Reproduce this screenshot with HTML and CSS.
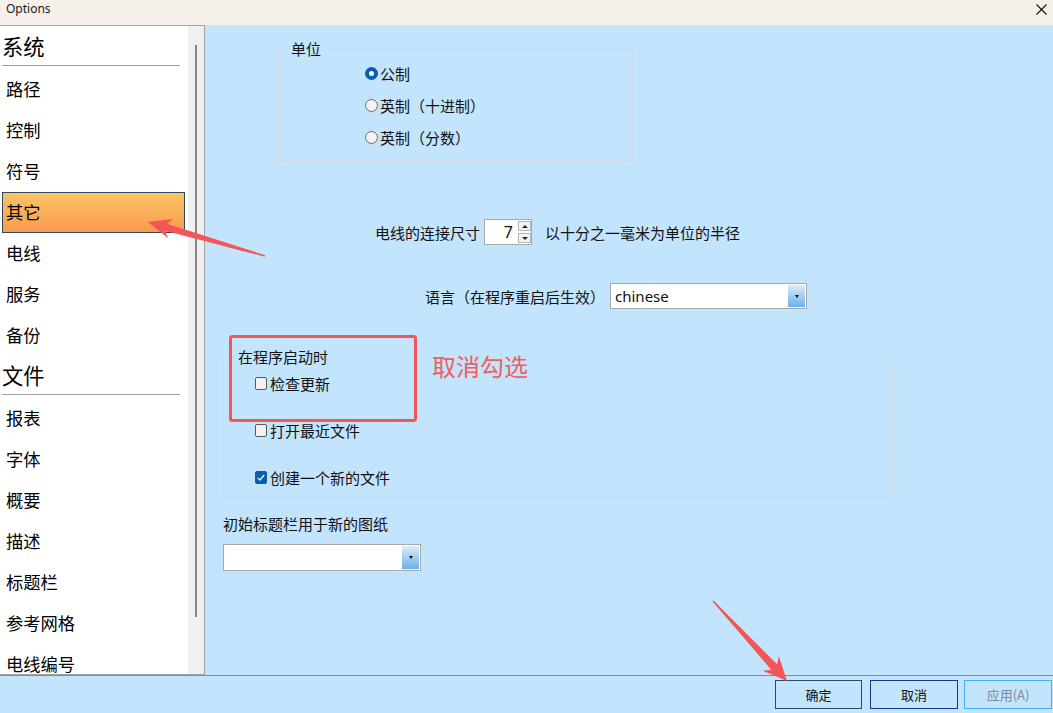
FILE: index.html
```html
<!DOCTYPE html>
<html lang="zh-CN">
<head>
<meta charset="utf-8">
<title>Options</title>
<link rel="stylesheet" href="styles.css">
</head>
<body>
<div class="window">
  <header class="titlebar">
    <span class="title">Options</span>
    <svg class="close" width="11" height="11" viewBox="0 0 11 11"><path d="M0.5 0.5 L10.5 10.5 M10.5 0.5 L0.5 10.5" stroke="#111" stroke-width="1.1" fill="none"/></svg>
  </header>
  <div class="main">
    <nav class="sidebar">
      <div class="nav-list">
        <div class="nav-head">系统</div>
        <div class="nav-item">路径</div>
        <div class="nav-item">控制</div>
        <div class="nav-item">符号</div>
        <div class="nav-item selected">其它</div>
        <div class="nav-item">电线</div>
        <div class="nav-item">服务</div>
        <div class="nav-item">备份</div>
        <div class="nav-head">文件</div>
        <div class="nav-item">报表</div>
        <div class="nav-item">字体</div>
        <div class="nav-item">概要</div>
        <div class="nav-item">描述</div>
        <div class="nav-item">标题栏</div>
        <div class="nav-item">参考网格</div>
        <div class="nav-item">电线编号</div>
      </div>
      <div class="scrolltrack"><div class="thumb"></div></div>
    </nav>
    <section class="content">
      <fieldset class="group units">
        <legend>单位</legend>
        <div class="radios">
          <label class="radio-row"><span class="radio checked"></span>公制</label>
          <label class="radio-row"><span class="radio"></span>英制（十进制）</label>
          <label class="radio-row"><span class="radio"></span>英制（分数）</label>
        </div>
      </fieldset>
      <div class="row wire">
        <span>电线的连接尺寸</span>
        <div class="spinner">
          <span class="spin-val">7</span>
          <div class="spin-btns"><span class="spin-btn up"></span><span class="spin-btn down"></span></div>
        </div>
        <span class="after">以十分之一毫米为单位的半径</span>
      </div>
      <div class="row lang">
        <span>语言（在程序重启后生效）</span>
        <div class="select lang-select"><span class="select-text">chinese</span><span class="drop"></span></div>
      </div>
      <fieldset class="group startup">
        <legend>在程序启动时</legend>
        <div class="checks">
          <label class="check-row"><span class="checkbox"></span>检查更新</label>
          <label class="check-row"><span class="checkbox"></span>打开最近文件</label>
          <label class="check-row"><span class="checkbox checked"><svg width="10" height="11" viewBox="0 0 10 11"><polyline points="1.8,5.8 4,8 8.2,3" fill="none" stroke="#fff" stroke-width="1.2"/></svg></span>创建一个新的文件</label>
        </div>
      </fieldset>
      <div class="label-title">初始标题栏用于新的图纸</div>
      <div class="select title-select"><span class="select-text"></span><span class="drop"></span></div>
    </section>
  </div>
  <footer class="footer">
    <button class="btn ok">确定</button>
    <button class="btn cancel">取消</button>
    <button class="btn apply">应用(A)</button>
  </footer>
  <svg class="annot" width="1053" height="713" viewBox="0 0 1053 713">
    <rect x="230.5" y="336.5" width="185" height="84" rx="2" fill="none" stroke="#f35656" stroke-width="3"/>
    <polygon transform="translate(265,256) rotate(196.2)" points="0,-0.7 103,-3.6 98,-10 122,0 98,10 103,3.6 0,0.7" fill="#f35656"/>
    <polygon transform="translate(713,601) rotate(47.2)" points="0,-0.7 90,-4 85,-11 109,0 85,11 90,4 0,0.7" fill="#f35656"/>
  </svg>
  <span class="annot-text">取消勾选</span>
</div>
</body>
</html>
```

FILE: styles.css
```css
html, body {
  margin: 0;
  padding: 0;
}
body {
  font-family: "Noto Sans CJK SC", "Noto Sans", sans-serif;
  color: #111;
  background: #c3e4fd;
}
.window {
  position: relative;
  width: 1053px;
  height: 713px;
  overflow: hidden;
  background: #c3e4fd;
}
.titlebar {
  height: 25px;
  box-sizing: border-box;
  background: #f6f0eb;
  display: flex;
  justify-content: space-between;
  align-items: flex-start;
  padding: 1px 6px 0 6px;
}
.title {
  font-family: "Noto Sans", "Liberation Sans", sans-serif;
  font-size: 12px;
  line-height: 16px;
  color: #1a1a1a;
}
.close {
  margin-top: 3px;
}
.main {
  display: flex;
  height: 650px;
}
.sidebar {
  width: 205px;
  flex: none;
  box-sizing: border-box;
  border-top: 1px solid #a3a3a3;
  border-right: 1px solid #a3a3a3;
  border-bottom: 1px solid #a3a3a3;
  background: #fff;
  display: flex;
  overflow: hidden;
}
.nav-list {
  width: 188px;
  flex: none;
  padding-top: 1px;
}
.nav-head {
  height: 38px;
  line-height: 37px;
  font-size: 21.3px;
  margin: 0 8px 3px 2px;
  border-bottom: 1px solid #a0a0a0;
  color: #000;
}
.nav-item {
  height: 41px;
  line-height: 39px;
  width: 183px;
  margin-left: 2px;
  padding-left: 4px;
  box-sizing: border-box;
  font-size: 17.3px;
  color: #000;
  white-space: nowrap;
}
.nav-item.selected {
  border: 1px solid #2b4860;
  padding-left: 3px;
  line-height: 37px;
  background: linear-gradient(#fbc564, #fb9950);
}
.scrolltrack {
  width: 16px;
  flex: none;
  background: #f0f0f0;
}
.thumb {
  width: 2px;
  height: 572px;
  margin: 19px 0 0 7px;
  background: #858585;
}
.content {
  flex: 1;
}
.group {
  box-sizing: border-box;
  border: 1px solid #d3dbe3;
  min-inline-size: 0;
}
.group legend {
  padding: 0 3px;
  font-size: 15px;
  line-height: 20px;
}
.units {
  width: 357px;
  margin: 14px 0 0 71px;
  padding: 0 0 7px 11px;
}
.radios {
  margin: -2px 0 0 77px;
}
.radio-row {
  display: flex;
  align-items: center;
  height: 32px;
  font-size: 15px;
}
.radio {
  width: 13px;
  height: 13px;
  box-sizing: border-box;
  border-radius: 50%;
  border: 1px solid #6c6c6c;
  background: #f3f3f3;
  margin-right: 2px;
}
.radio.checked {
  border: 4px solid #0c5db2;
  background: #fff;
}
.row {
  display: flex;
  align-items: center;
  height: 26px;
  font-size: 15px;
  white-space: nowrap;
}
.wire {
  margin: 58px 0 0 170px;
}
.spinner {
  width: 48px;
  height: 26px;
  box-sizing: border-box;
  border: 1px solid #a9a9a9;
  background: #fff;
  margin-left: 4px;
  display: flex;
  align-items: center;
}
.spin-val {
  flex: 1;
  text-align: right;
  padding-right: 5px;
  font-family: "Noto Sans", sans-serif;
  font-size: 16px;
}
.spin-btns {
  width: 13px;
  height: 24px;
  display: flex;
  flex-direction: column;
  justify-content: space-between;
  padding: 1px 0;
  box-sizing: border-box;
}
.spin-btn {
  height: 10px;
  box-sizing: border-box;
  border: 1px solid #b5b5b5;
  background: #f2f2f2;
  display: flex;
  align-items: center;
  justify-content: center;
}
.spin-btn.up::after {
  content: "";
  border-left: 3px solid transparent;
  border-right: 3px solid transparent;
  border-bottom: 3px solid #222;
}
.spin-btn.down::after {
  content: "";
  border-left: 3px solid transparent;
  border-right: 3px solid transparent;
  border-top: 3px solid #222;
}
.after {
  margin-left: 13px;
}
.lang {
  margin: 38px 0 0 220px;
}
.select {
  box-sizing: border-box;
  border: 1px solid #a8a8a8;
  background: #fff;
  display: flex;
  padding: 1px;
}
.select-text {
  flex: 1;
  padding-left: 3px;
  font-family: "Noto Sans", sans-serif;
  font-size: 15px;
  line-height: 22px;
  color: #111;
}
.drop {
  width: 17px;
  background: linear-gradient(#dcedfb, #6cafe9);
  display: flex;
  align-items: center;
  justify-content: center;
}
.drop::after {
  content: "";
  border-left: 2.5px solid transparent;
  border-right: 2.5px solid transparent;
  border-top: 3px solid #111;
}
.lang-select {
  width: 197px;
  height: 26px;
  margin-left: 5px;
}
.startup {
  width: 670px;
  margin: 38px 0 0 18px;
  padding: 4px 0 8px 11px;
}
.checks {
  margin-left: 20px;
  display: flex;
  flex-direction: column;
  gap: 23px;
}
.check-row {
  display: flex;
  align-items: center;
  height: 24px;
  font-size: 15px;
}
.checkbox {
  width: 12px;
  height: 13px;
  box-sizing: border-box;
  border: 1px solid #5a5a5a;
  border-radius: 2px;
  background: #f2f2f2;
  margin-right: 3px;
  display: flex;
  align-items: center;
  justify-content: center;
}
.checkbox.checked {
  background: #0c5db2;
  border-color: #0c5db2;
}
.label-title {
  margin: 16px 0 0 18px;
  font-size: 15px;
  line-height: 20px;
}
.title-select {
  width: 198px;
  height: 27px;
  margin: 10px 0 0 18px;
}
.footer {
  height: 38px;
  box-sizing: border-box;
  border-top: 1px solid #3b9fe9;
  display: flex;
  justify-content: flex-end;
  align-items: flex-start;
  padding: 4px 1px 0 0;
}
.btn {
  height: 29px;
  width: 88px;
  box-sizing: border-box;
  background: transparent;
  font-family: "Noto Sans CJK SC", sans-serif;
  font-size: 13px;
  color: #111;
  padding: 0;
  margin: 0;
  border: 1px solid #2c4a62;
}
.btn.ok {
  width: 87px;
}
.btn.cancel {
  margin-left: 8px;
  border-color: #0b3a8e;
}
.btn.apply {
  margin-left: 6px;
  border-color: #43aef5;
  color: #7d8c99;
}
.annot {
  position: absolute;
  left: 0;
  top: 0;
  pointer-events: none;
}
.annot-text {
  position: absolute;
  left: 432px;
  top: 354px;
  font-size: 24px;
  line-height: 24px;
  color: #f05e5e;
  white-space: nowrap;
}
```
